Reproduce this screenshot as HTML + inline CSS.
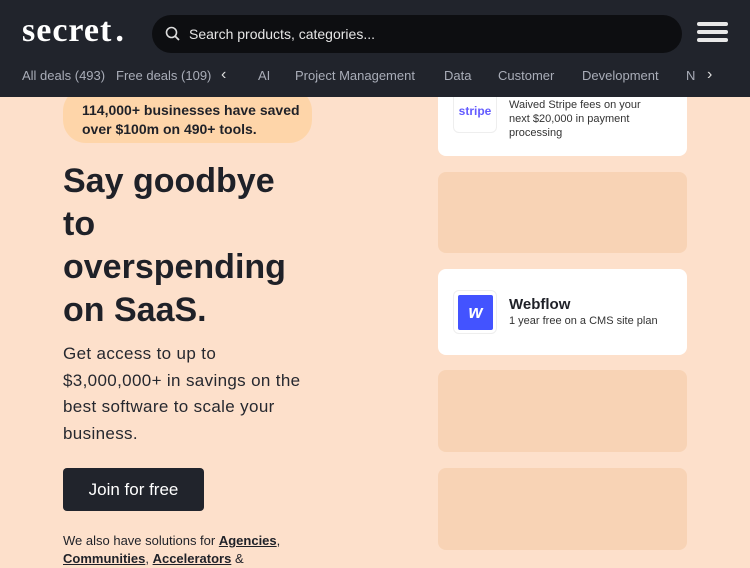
<!DOCTYPE html>
<html><head><meta charset="utf-8"><style>
*{margin:0;padding:0;box-sizing:border-box}
body{width:750px;height:563px;overflow:hidden;background:#fde0cb;font-family:"Liberation Sans",sans-serif;color:#1f2128;position:relative}
.hdr{position:absolute;left:0;top:0;width:750px;height:97px;background:#21242c;z-index:5}
.logo{position:absolute;left:22px;top:12px;font-family:"Liberation Serif",serif;font-weight:bold;font-size:34px;color:#fff;letter-spacing:1px}
.search{position:absolute;left:152px;top:15px;width:530px;height:38px;background:#0d0e11;border-radius:19px;color:#e6e6e6;font-size:14px;line-height:38px;padding-left:37px}
.search svg{position:absolute;left:13px;top:11px}
.burger{position:absolute;left:697px;top:22px;width:31px}
.burger div{height:4px;background:#e8e8e8;border-radius:2px;margin-bottom:4px}
.nav{position:absolute;top:68px;left:0;font-size:13px;color:#a9adb8;white-space:nowrap}
.nav span{position:absolute}
.card{position:absolute;left:438px;width:249px;border-radius:8px;background:#fff}
.ph{position:absolute;left:438px;width:249px;border-radius:8px;background:#f8d3b5}
.ico{position:absolute;left:15px;width:44px;height:44px;border:1px solid #eee;border-radius:6px}
</style></head><body>
<div class="hdr">
<div class="logo">secret<span style="margin-left:3px">.</span></div>
<div class="search"><svg width="16" height="16" viewBox="0 0 16 16"><circle cx="6.5" cy="6.5" r="5" fill="none" stroke="#ddd" stroke-width="1.6"/><path d="M10.2 10.2L14 14" stroke="#ddd" stroke-width="1.8"/></svg>Search products, categories...</div>
<div class="burger"><div></div><div></div><div></div></div>
<div class="nav"><span style="left:22px">All deals (493)</span><span style="left:116px">Free deals (109)</span><span style="left:221px;color:#ddd;font-size:16px;top:-2px">‹</span><span style="left:258px">AI</span><span style="left:295px">Project Management</span><span style="left:444px">Data</span><span style="left:498px">Customer</span><span style="left:582px">Development</span><span style="left:686px">N</span><span style="left:707px;color:#ddd;font-size:16px;top:-2px">›</span></div>
</div>
<div style="position:absolute;left:63px;top:88px;width:249px;height:55px;background:#fed5a9;border-radius:23px"></div>
<div style="position:absolute;left:82px;top:101px;font-size:14px;font-weight:bold;line-height:19px;color:#1f2128">114,000+ businesses have saved<br>over $100m on 490+ tools.</div>
<div style="position:absolute;left:63px;top:160px;font-size:34px;font-weight:bold;line-height:43px">Say goodbye<br>to<br>overspending<br>on SaaS.</div>
<div style="position:absolute;left:63px;top:341px;font-size:17px;line-height:26.5px;color:#26282f;letter-spacing:0.35px">Get access to up to<br>$3,000,000+ in savings on the<br>best software to scale your<br>business.</div>
<div style="position:absolute;left:63px;top:468px;width:141px;height:43px;background:#21242c;border-radius:4px;color:#fff;font-size:17px;line-height:43px;text-align:center">Join for free</div>
<div style="position:absolute;left:63px;top:532px;font-size:13px;line-height:18px">We also have solutions for <b style="text-decoration:underline">Agencies</b>,<br><b style="text-decoration:underline">Communities</b>, <b style="text-decoration:underline">Accelerators</b> &amp;</div>
<div class="card" style="top:60px;height:96px"><div class="ico" style="top:29px;color:#635bff;font-weight:bold;font-size:12px;text-align:center;line-height:42px">stripe</div><div style="position:absolute;left:71px;top:38px;font-size:11px;line-height:14px;color:#333">Waived Stripe fees on your<br>next $20,000 in payment<br>processing</div></div>
<div class="ph" style="top:172px;height:81px"></div>
<div class="card" style="top:269px;height:86px"><div class="ico" style="top:21px"><div style="position:absolute;left:4px;top:4px;width:35px;height:35px;background:#4353ff;border-radius:2px;color:#fff;font-weight:bold;font-style:italic;font-size:18px;text-align:center;line-height:35px">w</div></div><div style="position:absolute;left:71px;top:27px;font-size:15px;font-weight:bold">Webflow</div><div style="position:absolute;left:71px;top:46px;font-size:11px;color:#333">1 year free on a CMS site plan</div></div>
<div class="ph" style="top:370px;height:82px"></div>
<div class="ph" style="top:468px;height:82px"></div>
</body></html>
